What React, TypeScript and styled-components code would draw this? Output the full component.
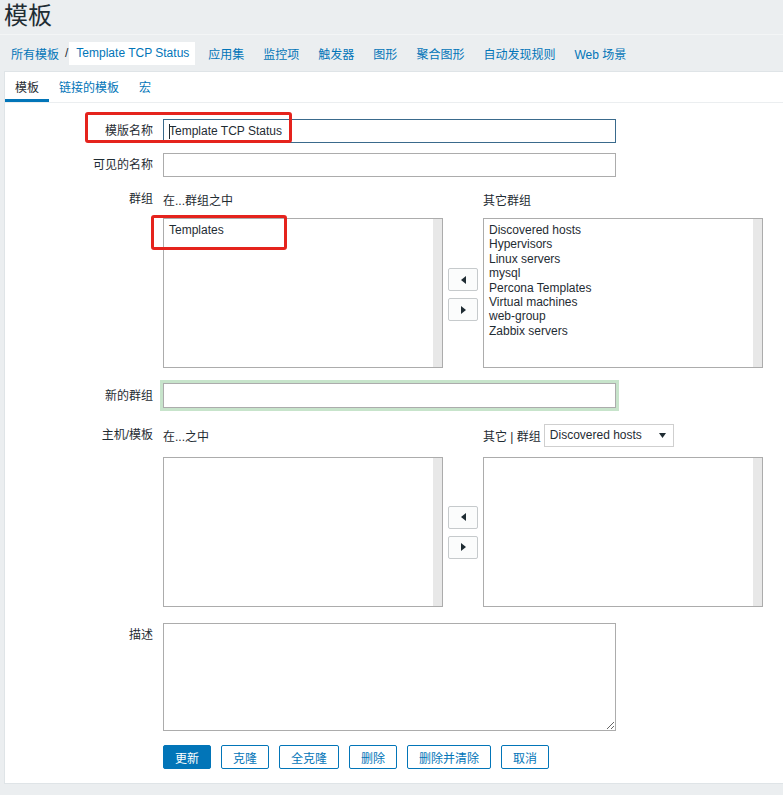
import React from 'react'
import styled, { createGlobalStyle } from 'styled-components'

const GlobalStyle = createGlobalStyle`
  html, body {
    margin: 0;
    padding: 0;
    background: #ebeef0;
  }
  body {
    font-family: 'Liberation Sans', Arial, 'Noto Sans CJK SC', sans-serif;
    font-size: 12px;
    color: #1f2c33;
  }
  * { box-sizing: border-box; }
`

const Page = styled.div`
  position: relative;
  width: 783px;
  min-height: 795px;
  background: #ebeef0;
  overflow: hidden;
`

const Header = styled.header`
  height: 35px;
  padding: 2px 0 0 4px;
  border-bottom: 1px solid #f3f5f6;
`

const Title = styled.h1`
  margin: 0;
  font-size: 24px;
  line-height: 28px;
  font-weight: normal;
  color: #1f2c33;
`

const Nav = styled.nav`
  display: flex;
  align-items: center;
  height: 36px;
  padding-left: 11px;
`

const Crumb = styled.a`
  color: #0275b8;
  text-decoration: none;
`

const Sep = styled.span`
  color: #1f2c33;
  margin: 0 1px 0 6px;
`

const ActiveCrumb = styled.span`
  background: #fff;
  color: #0275b8;
  padding: 4px 6px 5px 7px;
`

const NavLinks = styled.div`
  display: flex;
  gap: 19px;
  margin-left: 13px;
`

const Panel = styled.main`
  margin-left: 4px;
  height: 713px;
  background: #fff;
  border: 1px solid #dfe4e7;
  border-right: none;
`

const Tabs = styled.div`
  display: flex;
  height: 31px;
  border-bottom: 1px solid #ebeef0;
`

const Tab = styled.a<{ $active?: boolean }>`
  display: flex;
  align-items: center;
  padding: 2px 10px 0;
  color: ${p => (p.$active ? '#1f2c33' : '#0275b8')};
  border-bottom: 3px solid ${p => (p.$active ? '#0275b8' : 'transparent')};
  text-decoration: none;
`

const Form = styled.div`
  display: flex;
  flex-direction: column;
  gap: 10px;
  padding-top: 16px;
`

const Row = styled.div<{ $space?: number }>`
  display: grid;
  grid-template-columns: 148px 1fr;
  column-gap: 10px;
  margin-top: ${p => p.$space ?? 0}px;
`

const Label = styled.label<{ $top?: number }>`
  text-align: right;
  align-self: ${p => (p.$top !== undefined ? 'start' : 'center')};
  padding-top: ${p => p.$top ?? 0}px;
  line-height: 14px;
`

const FieldWrap = styled.div`
  position: relative;
  width: 453px;
`

const TextInput = styled.input<{ $focus?: boolean }>`
  display: block;
  width: 453px;
  height: 24px;
  padding: 0 5px;
  border: 1px solid ${p => (p.$focus ? '#3a6a8c' : '#acacac')};
  background: #fff;
  font: inherit;
  color: #1f2c33;
  outline: none;
`

const GlowInput = styled(TextInput)`
  height: 25px;
  box-shadow: 0 0 0 3px #c7e4cb;
`

const Caret = styled.span`
  position: absolute;
  left: 6px;
  top: 5px;
  width: 1px;
  height: 15px;
  background: #1f2c33;
`

const Picker = styled.div`
  display: grid;
  grid-template-columns: 280px 30px 280px;
  column-gap: 5px;
  row-gap: 10px;
  align-items: center;
`

const PickHead = styled.div`
  display: flex;
  align-items: center;
  height: 24px;
  gap: 3px;
`

const ListBox = styled.div`
  position: relative;
  height: 150px;
  border: 1px solid #acacac;
  padding: 4px 15px 0 5px;
  line-height: 14.4px;
  color: #1f2c33;
  &::after {
    content: '';
    position: absolute;
    top: 0;
    right: 0;
    bottom: 0;
    width: 9px;
    background: #e8e8e8;
  }
`

const Movers = styled.div`
  display: flex;
  flex-direction: column;
  gap: 7px;
`

const MoveBtn = styled.button`
  width: 30px;
  height: 23px;
  padding: 0;
  display: flex;
  align-items: center;
  justify-content: center;
  background: #fbfcfc;
  border: 1px solid #c6cacc;
  border-radius: 2px;
`

const Select = styled.div`
  display: flex;
  align-items: center;
  justify-content: space-between;
  width: 130px;
  height: 23px;
  padding: 0 7px 0 5px;
  border: 1px solid #cfcfcf;
  background: #fff;
`

const TextArea = styled.textarea`
  display: block;
  width: 453px;
  height: 108px;
  border: 1px solid #acacac;
  font: inherit;
  resize: both;
  outline: none;
`

const Buttons = styled.div`
  display: flex;
  gap: 10px;
`

const Button = styled.button<{ $primary?: boolean }>`
  height: 24px;
  padding: 0 11px;
  font: inherit;
  border-radius: 2px;
  border: 1px solid #0275b8;
  background: ${p => (p.$primary ? '#0275b8' : '#fff')};
  color: ${p => (p.$primary ? '#fff' : '#0275b8')};
`

const Mark = styled.div<{ $x: number; $y: number; $w: number; $h: number }>`
  position: absolute;
  left: ${p => p.$x}px;
  top: ${p => p.$y}px;
  width: ${p => p.$w}px;
  height: ${p => p.$h}px;
  border: 3px solid #e5231d;
  border-radius: 3px;
  pointer-events: none;
`

const Arrow = ({ dir }: { dir: 'left' | 'right' | 'down' }) => {
  if (dir === 'down')
    return (
      <svg width="7" height="5" viewBox="0 0 7 5">
        <polygon points="0,0 7,0 3.5,5" fill="#1f2c33" />
      </svg>
    )
  return (
    <svg width="5" height="8" viewBox="0 0 5 8">
      <polygon points={dir === 'left' ? '5,0 5,8 0,4' : '0,0 0,8 5,4'} fill="#1f2c33" />
    </svg>
  )
}

const otherGroups = [
  'Discovered hosts',
  'Hypervisors',
  'Linux servers',
  'mysql',
  'Percona Templates',
  'Virtual machines',
  'web-group',
  'Zabbix servers',
]

const navLinks = ['应用集', '监控项', '触发器', '图形', '聚合图形', '自动发现规则', 'Web 场景']

const Movers2 = () => (
  <Movers>
    <MoveBtn><Arrow dir="left" /></MoveBtn>
    <MoveBtn><Arrow dir="right" /></MoveBtn>
  </Movers>
)

const App = () => {
  return (
    <Page>
      <GlobalStyle />
      <Header>
        <Title>模板</Title>
      </Header>
      <Nav>
        <Crumb>所有模板</Crumb>
        <Sep>/</Sep>
        <ActiveCrumb>Template TCP Status</ActiveCrumb>
        <NavLinks>
          {navLinks.map(l => (
            <Crumb key={l}>{l}</Crumb>
          ))}
        </NavLinks>
      </Nav>

      <Panel>
        <Tabs>
          <Tab $active>模板</Tab>
          <Tab>链接的模板</Tab>
          <Tab>宏</Tab>
        </Tabs>

        <Form>
          <Row>
            <Label>模版名称</Label>
            <FieldWrap>
              <TextInput $focus readOnly value="Template TCP Status" />
              <Caret />
            </FieldWrap>
          </Row>
          <Row>
            <Label>可见的名称</Label>
            <TextInput readOnly value="" />
          </Row>
          <Row>
            <Label $top={5}>群组</Label>
            <Picker>
              <PickHead>在...群组之中</PickHead>
              <div />
              <PickHead>其它群组</PickHead>
              <ListBox style={{ marginTop: -3 }}>
                <div>Templates</div>
              </ListBox>
              <Movers2 />
              <ListBox style={{ marginTop: -3 }}>
                {otherGroups.map(g => (
                  <div key={g}>{g}</div>
                ))}
              </ListBox>
            </Picker>
          </Row>
          <Row $space={5}>
            <Label>新的群组</Label>
            <GlowInput readOnly value="" />
          </Row>
          <Row $space={5}>
            <Label $top={5}>主机/模板</Label>
            <Picker>
              <PickHead>在...之中</PickHead>
              <div />
              <PickHead>
                其它 | 群组
                <Select>
                  Discovered hosts
                  <Arrow dir="down" />
                </Select>
              </PickHead>
              <ListBox />
              <Movers2 />
              <ListBox />
            </Picker>
          </Row>
          <Row $space={6}>
            <Label $top={5}>描述</Label>
            <TextArea readOnly value="" />
          </Row>
          <Row $space={4}>
            <div />
            <Buttons>
              <Button $primary>更新</Button>
              <Button>克隆</Button>
              <Button>全克隆</Button>
              <Button>删除</Button>
              <Button>删除并清除</Button>
              <Button>取消</Button>
            </Buttons>
          </Row>
        </Form>
      </Panel>

      <Mark $x={85} $y={112} $w={207} $h={31} />
      <Mark $x={151} $y={215} $w={136} $h={35} />
    </Page>
  )
}

export default App
